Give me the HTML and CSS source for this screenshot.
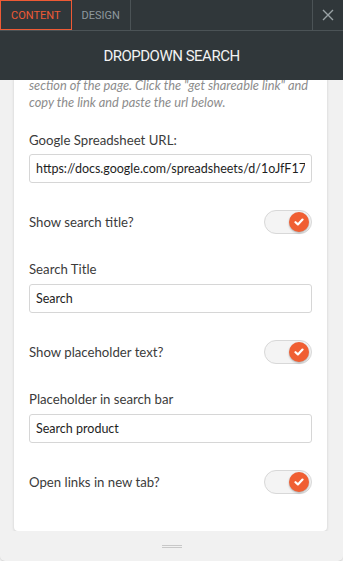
FILE: index.html
```html
<!DOCTYPE html>
<html lang="en">
<head>
    <meta charset="UTF-8">
    <meta name="viewport" content="width=device-width, initial-scale=1.0">
    <title>Dropdown Search</title>
    <link rel="stylesheet" href="styles.css">
</head>
<body>
    <div class="panel">
        <div class="topbar">
            <div class="tab active">CONTENT</div>
            <div class="tab">DESIGN</div>
            <div class="spacer"></div>
            <div class="close">
                <svg width="12" height="12" viewBox="0 0 12 12">
                    <path d="M1 1 L11 11 M11 1 L1 11" stroke="#9aa3a6" stroke-width="1.4" fill="none"/>
                </svg>
            </div>
        </div>
        <div class="header">DROPDOWN SEARCH</div>

        <div class="scroll">
            <div class="card">
                <p class="intro">section of the page. Click the "get shareable link" and copy the link and paste the url below.</p>

                <div class="field first">
                    <label for="sheet">Google Spreadsheet URL:</label>
                    <input type="text" id="sheet" class="input-field" value="https://docs.google.com/spreadsheets/d/1oJfF176">
                </div>

                <div class="toggle-row">
                    <span>Show search title?</span>
                    <div class="toggle"><div class="knob">
                        <svg width="10" height="8" viewBox="0 0 10 8"><path d="M1.5 4.2 L3.9 6.4 L8.5 1.6" stroke="#fff" stroke-width="2.2" fill="none" stroke-linecap="round" stroke-linejoin="round"/></svg>
                    </div></div>
                </div>

                <div class="field">
                    <label for="title">Search Title</label>
                    <input type="text" id="title" class="input-field" value="Search">
                </div>

                <div class="toggle-row">
                    <span>Show placeholder text?</span>
                    <div class="toggle"><div class="knob">
                        <svg width="10" height="8" viewBox="0 0 10 8"><path d="M1.5 4.2 L3.9 6.4 L8.5 1.6" stroke="#fff" stroke-width="2.2" fill="none" stroke-linecap="round" stroke-linejoin="round"/></svg>
                    </div></div>
                </div>

                <div class="field">
                    <label for="placeholder">Placeholder in search bar</label>
                    <input type="text" id="placeholder" class="input-field" value="Search product">
                </div>

                <div class="toggle-row">
                    <span>Open links in new tab?</span>
                    <div class="toggle"><div class="knob">
                        <svg width="10" height="8" viewBox="0 0 10 8"><path d="M1.5 4.2 L3.9 6.4 L8.5 1.6" stroke="#fff" stroke-width="2.2" fill="none" stroke-linecap="round" stroke-linejoin="round"/></svg>
                    </div></div>
                </div>
            </div>
        </div>

        <div class="handle"></div>
    </div>
</body>
</html>
```

FILE: styles.css
```css
body {
    margin: 0;
    background-color: #fff;
    font-family: Lato, "Open Sans", sans-serif;
}

.panel {
    width: 343px;
    height: 561px;
    background-color: #f1f1f1;
    border-radius: 0 0 5px 5px;
    box-shadow: 0 1px 3px rgba(0, 0, 0, 0.25);
    display: flex;
    flex-direction: column;
    overflow: hidden;
}

.topbar {
    height: 30px;
    display: flex;
    background-color: #30373a;
    border-bottom: 1px solid #4b5356;
    font-family: Roboto, sans-serif;
    font-size: 11px;
}

.tab {
    display: flex;
    align-items: center;
    padding: 0 10px;
    color: #8e999e;
    border-right: 1px solid #4b5356;
}

.tab.active {
    color: #ee5a35;
    border: 1px solid #ee5a35;
    padding: 0 10px;
    height: 28px;
}

.spacer {
    flex: 1;
    border-right: 1px solid #4b5356;
}

.close {
    width: 30px;
    display: flex;
    align-items: center;
    justify-content: center;
}

.header {
    height: 49px;
    display: flex;
    align-items: center;
    justify-content: center;
    background-color: #30373a;
    color: #f2f2f2;
    font-family: Roboto, sans-serif;
    font-size: 15px;
    letter-spacing: -0.5px;
}

.scroll {
    flex: 1;
    overflow: hidden;
    padding: 0 16px 0 14px;
}

.card {
    margin-top: -3px;
    background-color: #fff;
    border-radius: 0 0 4px 4px;
    box-shadow: 0 1px 3px rgba(0, 0, 0, 0.15);
    padding: 0 15px 37px;
    color: #3b3b3b;
    font-size: 13.2px;
}

.intro {
    margin: 0;
    line-height: 17px;
    font-style: italic;
    color: #8c8c8c;
    font-size: 12.8px;
}

.field {
    margin-top: 27px;
}

.field.first {
    margin-top: 21px;
}

label {
    display: block;
    line-height: 17px;
    margin-bottom: 6px;
}

.first label {
    margin-bottom: 5px;
}

.input-field {
    box-sizing: border-box;
    display: block;
    width: 100%;
    height: 29px;
    padding: 0 6px;
    border: 1px solid #d6d6d6;
    border-radius: 3px;
    font-family: Lato, sans-serif;
    font-size: 12.5px;
    color: #1e1e1e;
    outline: none;
}

.toggle-row {
    margin-top: 27px;
    display: flex;
    align-items: center;
    justify-content: space-between;
}

.toggle {
    box-sizing: border-box;
    width: 48px;
    height: 24px;
    border-radius: 12px;
    background-color: #f4f4f4;
    border: 1px solid #d8d8d8;
    display: flex;
    align-items: center;
    justify-content: flex-end;
    padding-right: 2px;
}

.knob {
    width: 20px;
    height: 20px;
    border-radius: 50%;
    background-color: #f05f33;
    box-shadow: 0 1px 2px rgba(0, 0, 0, 0.3);
    display: flex;
    align-items: center;
    justify-content: center;
}

.handle {
    height: 30px;
    display: flex;
    align-items: center;
    justify-content: center;
}

.handle::before {
    content: "";
    width: 20px;
    height: 1px;
    border-top: 1px solid #c8c8c8;
    border-bottom: 1px solid #c8c8c8;
}
```
